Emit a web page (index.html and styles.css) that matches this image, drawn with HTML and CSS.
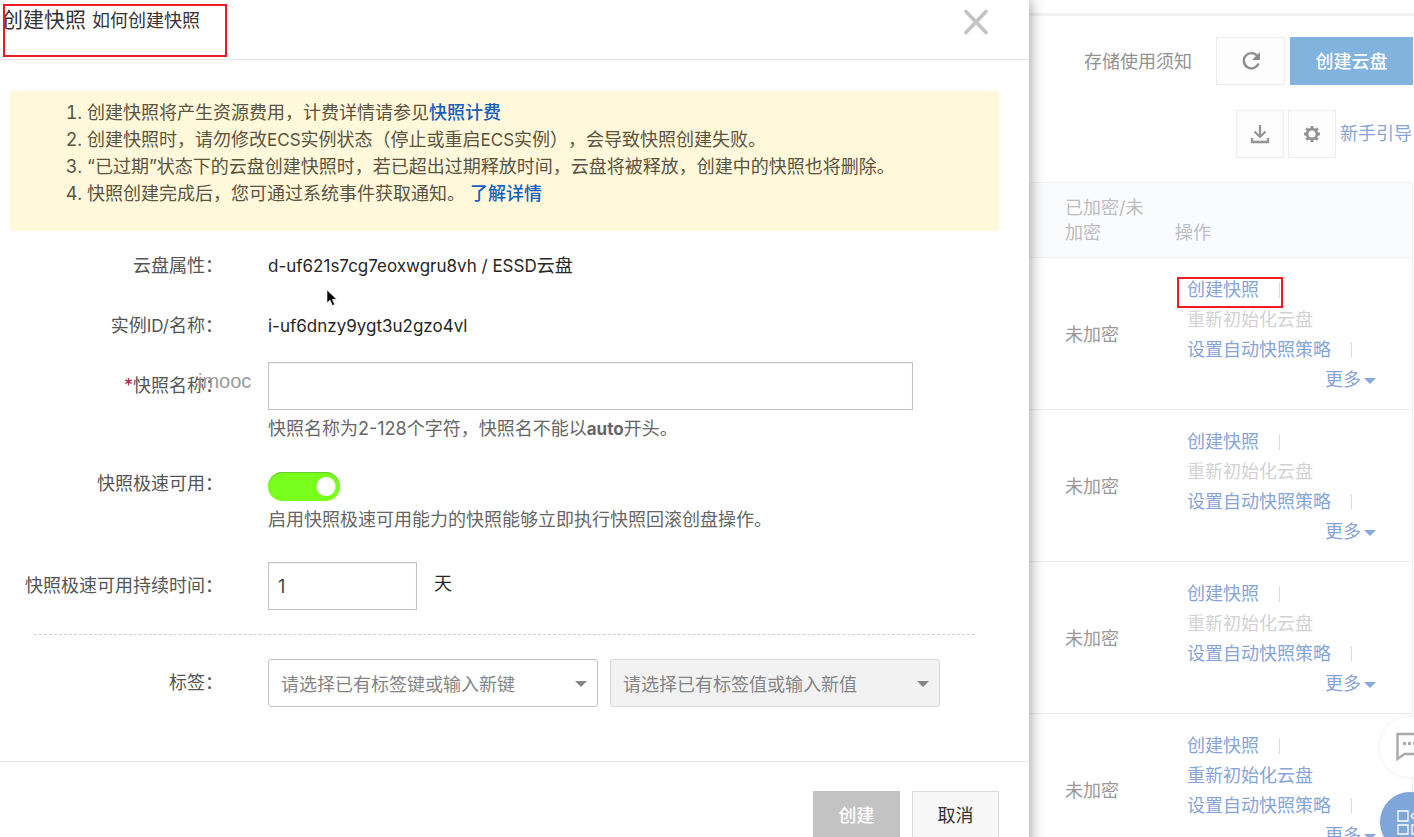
FILE: index.html
```html
<!DOCTYPE html>
<html lang="zh-CN">
<head>
<meta charset="utf-8">
<title>创建快照</title>
<link rel="stylesheet" href="styles.css">
</head>
<body>
<div class="app">
  <main class="dialog">
    <header class="dialog-head">
      <h1 class="title">创建快照 <a class="title-help" href="#">如何创建快照</a></h1>
      <button class="close" type="button" aria-label="关闭">
        <svg width="26" height="26" viewBox="0 0 26 26"><path d="M3 2.5 23 23.5M23 2.5 3 23.5" fill="none" stroke="#c3c3c3" stroke-width="3.6" stroke-linecap="round"/></svg>
      </button>
      <span class="mark mark-title"></span>
    </header>

    <section class="notice">
      <ol>
        <li>创建快照将产生资源费用，计费详情请参见<a href="#">快照计费</a></li>
        <li>创建快照时，请勿修改<span class="latin">ECS</span>实例状态（停止或重启<span class="latin">ECS</span>实例），会导致快照创建失败。</li>
        <li>“已过期”状态下的云盘创建快照时，若已超出过期释放时间，云盘将被释放，创建中的快照也将删除。</li>
        <li>快照创建完成后，您可通过系统事件获取通知。 <a href="#">了解详情</a></li>
      </ol>
    </section>

    <form class="form">
      <div class="row">
        <span class="label">云盘属性：</span>
        <div class="field value"><span class="latin">d-uf621s7cg7eoxwgru8vh / ESSD</span>云盘
          <svg class="cursor" width="12" height="18" viewBox="0 0 12 18"><path d="M1 1v13l3-3 2.400 5.500 2.200-1L6.300 10.200H10.600z" fill="#000" stroke="#fff" stroke-width=".6"/></svg>
        </div>
      </div>
      <div class="row">
        <span class="label">实例<span class="latin">ID/</span>名称：</span>
        <div class="field value"><span class="latin">i-uf6dnzy9ygt3u2gzo4vl</span></div>
      </div>
      <div class="row">
        <label class="label" for="name"><span class="required">*</span>快照名称：</label>
        <div class="field">
          <input class="text" id="name" type="text">
          <p class="hint">快照名称为2-128个字符，快照名不能以<b class="latin">auto</b>开头。</p>
        </div>
        <span class="watermark">imooc</span>
      </div>
      <div class="row">
        <label class="label" for="instant">快照极速可用：</label>
        <div class="field switch-field">
          <input class="switch" id="instant" type="checkbox" checked>
          <p class="hint">启用快照极速可用能力的快照能够立即执行快照回滚创盘操作。</p>
        </div>
      </div>
      <div class="row">
        <label class="label" for="days">快照极速可用持续时间：</label>
        <div class="field value inline">
          <input class="text days" id="days" type="text" value="1"><span>天</span>
        </div>
      </div>
      <hr class="divider">
      <div class="row">
        <label class="label" for="tag-key">标签：</label>
        <div class="field tags">
          <span class="picker"><select id="tag-key"><option>请选择已有标签键或输入新键</option></select></span>
          <span class="picker"><select aria-label="标签值" disabled><option>请选择已有标签值或输入新值</option></select></span>
        </div>
      </div>
    </form>

    <footer class="dialog-foot">
      <button class="btn btn-disabled" type="button" disabled>创建</button>
      <button class="btn" type="button">取消</button>
    </footer>
  </main>

  <aside class="side">
    <div class="topbar"></div>
    <div class="tools">
      <span class="tools-text">存储使用须知</span>
      <button class="tool wide" type="button" aria-label="刷新">
        <svg width="20" height="20" viewBox="0 0 20 20"><path d="M16.300 5A7.600 7.600 0 1 0 17.500 12.500" fill="none" stroke="#8c8c8c" stroke-width="2.300"/><path d="M19 1v8h-8z" fill="#8c8c8c"/></svg>
      </button>
      <button class="create" type="button">创建云盘</button>
    </div>
    <div class="tools tools-second">
      <button class="tool" type="button" aria-label="下载">
        <svg width="20" height="20" viewBox="0 0 20 20"><path d="M10 1v11M4.500 7.500l5.500 5.500 5.500-5.500" fill="none" stroke="#949494" stroke-width="2.200"/><path d="M2 14v4h16v-4" fill="none" stroke="#949494" stroke-width="2.400"/></svg>
      </button>
      <button class="tool" type="button" aria-label="设置">
        <svg width="18" height="18" viewBox="0 0 18 18" fill="none" stroke="#929292"><circle cx="9" cy="9" r="4.900" stroke-width="2.600"/><path d="M9 1v2.800M9 14.200V17M1 9h2.800M14.200 9H17M3.300 3.300l2 2M12.700 12.700l2 2M3.300 14.700l2-2M12.700 5.300l2-2" stroke-width="3"/></svg>
      </button>
      <a class="guide" href="#">新手引导</a>
    </div>

    <table class="disks">
      <thead>
        <tr><th class="col-state">已加密/未<br>加密</th><th>操作</th></tr>
      </thead>
      <tbody>
        <tr>
          <td class="col-state">未加密</td>
          <td class="ops">
            <div><a href="#">创建快照</a><i class="bar"></i><span class="mark mark-op"></span></div>
            <div class="off">重新初始化云盘</div>
            <div><a href="#">设置自动快照策略</a><i class="bar"></i></div>
            <div class="more"><a href="#">更多</a></div>
          </td>
        </tr>
        <tr>
          <td class="col-state">未加密</td>
          <td class="ops">
            <div><a href="#">创建快照</a><i class="bar"></i></div>
            <div class="off">重新初始化云盘</div>
            <div><a href="#">设置自动快照策略</a><i class="bar"></i></div>
            <div class="more"><a href="#">更多</a></div>
          </td>
        </tr>
        <tr>
          <td class="col-state">未加密</td>
          <td class="ops">
            <div><a href="#">创建快照</a><i class="bar"></i></div>
            <div class="off">重新初始化云盘</div>
            <div><a href="#">设置自动快照策略</a><i class="bar"></i></div>
            <div class="more"><a href="#">更多</a></div>
          </td>
        </tr>
        <tr>
          <td class="col-state">未加密</td>
          <td class="ops">
            <div><a href="#">创建快照</a><i class="bar"></i></div>
            <div><a href="#">重新初始化云盘</a></div>
            <div><a href="#">设置自动快照策略</a><i class="bar"></i></div>
            <div class="more"><a href="#">更多</a></div>
          </td>
        </tr>
      </tbody>
    </table>

    <div class="floats">
      <button class="float" type="button" aria-label="咨询">
        <svg width="28" height="30" viewBox="0 0 28 30"><path d="M1.500 2H26.500V22H8.500L1.500 27z" fill="none" stroke="#a9a9a9" stroke-width="2.400"/><path d="M7 11.500h3M12 11.500h3M17 11.500h3" stroke="#a9a9a9" stroke-width="3"/></svg>
      </button>
      <button class="float float-blue" type="button" aria-label="应用">
        <svg width="26" height="26" viewBox="0 0 26 26" fill="none" stroke="#fff" stroke-width="1.300"><path d="M1 2h10v10H1zM1 16h10v9H1zM15 16h10v9H15zM20 1l6 6-6 6-6-6z"/></svg>
      </button>
    </div>
  </aside>
</div>
</body>
</html>
```
FILE: styles.css
```css
* { box-sizing: border-box; }

body {
  margin: 0;
  font: 18px/30px Inter, "Noto Sans CJK SC", sans-serif;
  text-spacing-trim: space-all;
  color: #555;
  background: #fff;
}

button, input, select { font: inherit; }
button { cursor: pointer; }
a { text-decoration: none; }
.latin { font-size: 17px; line-height: 1; }

.app {
  display: flex;
  height: 100vh;
  overflow: hidden;
}

/* Dialog */
.dialog {
  position: relative;
  z-index: 1;
  flex: 1;
  min-width: 0;
  height: max-content;
  min-height: 100%;
  background: #fff;
  box-shadow: 0 0 14px rgba(0, 0, 0, .45);
}

.dialog-head {
  position: relative;
  display: flex;
  justify-content: space-between;
  align-items: flex-start;
  height: 60px;
  padding: 5px 40px 0 2px;
  border-bottom: 1px solid #e4e4e4;
}

.title {
  margin: 0;
  font-size: 21px;
  font-weight: 400;
  color: #333;
}

.title-help { font-size: 18px; color: #333; }

.close {
  display: flex;
  padding: 4px 0;
  border: 0;
  background: none;
}

.mark {
  position: absolute;
  border: 2px solid #ec1c24;
  pointer-events: none;
}

.mark-title { left: 3px; top: 4px; width: 224px; height: 53px; }
.mark-op { left: -10px; top: 2px; width: 106px; height: 31px; }

.notice {
  margin: 31px 30px 11px 10px;
  padding: 8px 0 24px;
  background: #fff8da;
  color: #5b5340;
}

.notice ol {
  margin: 0;
  padding-left: 77px;
  line-height: 27px;
}

.notice a { color: #1560bd; font-weight: 500; }

.row {
  position: relative;
  display: flex;
  gap: 45px;
  margin-bottom: 12px;
}

.label {
  flex: 0 0 223px;
  line-height: 48px;
  text-align: right;
  white-space: nowrap;
}

.required { color: #b3173f; }

.field {
  position: relative;
  flex: 1;
  min-width: 0;
  padding-right: 30px;
}

.value { line-height: 48px; color: #262626; }

.inline { display: flex; gap: 17px; line-height: 44px; }

.cursor {
  position: absolute;
  left: 58px;
  top: 47px;
}

.text {
  display: block;
  width: 100%;
  max-width: 645px;
  height: 48px;
  padding: 0 9px;
  border: 1px solid #c3c3c3;
  border-radius: 0;
  background: #fff;
  color: #444;
  box-shadow: inset 0 1px 2px rgba(0, 0, 0, .06);
}

.days { width: 149px; }

.hint { margin: 0; line-height: 38px; color: #666; }

.watermark {
  position: absolute;
  left: 198px;
  top: 4px;
  font: 20px/30px "Liberation Sans", Arial, sans-serif;
  color: #9a9a9a;
}

.switch-field { padding-top: 12px; padding-bottom: 11px; }

.switch {
  display: block;
  appearance: none;
  width: 72px;
  height: 29px;
  margin: 0;
  border-radius: 15px;
  background: radial-gradient(circle at 58px 50%, #fff 9px, #78ff1c 10px);
  box-shadow: inset 0 1px 1px #67c62b;
}

.divider {
  margin: 24px 54px 24px 34px;
  border: 0;
  border-top: 1px dashed #cfcfcf;
}

.tags { display: flex; gap: 12px; }

.picker {
  position: relative;
  flex: 0 1 330px;
}

.picker::after {
  content: "";
  position: absolute;
  right: 11px;
  top: 22px;
  width: 12px;
  height: 6px;
  background: #858585;
  clip-path: polygon(0 0, 100% 0, 50% 100%);
  pointer-events: none;
}

.picker select {
  appearance: none;
  width: 100%;
  height: 48px;
  padding: 3px 30px 0 12px;
  border: 1px solid #c3c3c3;
  border-radius: 3px;
  background: #fff;
  color: #858585;
  opacity: 1;
}

.picker select:disabled { background: #f2f2f2; border-color: #d8d8d8; }

.dialog-foot {
  display: flex;
  justify-content: flex-end;
  gap: 12px;
  margin-top: 54px;
  padding: 29px 30px 30px;
  border-top: 1px solid #e4e4e4;
}

.btn {
  width: 87px;
  height: 48px;
  padding: 2px 0 0;
  border: 1px solid #dcdcdc;
  background: #f7f7f7;
  color: #333;
}

.btn-disabled {
  border-color: #c3c3c3;
  background: #c3c3c3;
  color: #fff;
  font-weight: 500;
}

/* Page behind the dialog */
.side {
  position: relative;
  flex: 0 0 385px;
  overflow: hidden;
}

.topbar {
  height: 16px;
  border-bottom: 3px solid #f1f1f1;
}

.tools {
  display: flex;
  justify-content: flex-end;
  align-items: center;
  gap: 5px;
  padding: 21px 1px 0 0;
}

.tools-second { gap: 4px; padding: 25px 2px 24px 0; }

.tools-text { margin-right: 19px; padding-top: 2px; color: #929292; }

.tool {
  display: flex;
  align-items: center;
  justify-content: center;
  width: 48px;
  height: 48px;
  padding: 0;
  border: 1px solid #ececec;
  background: #fdfdfd;
}

.wide { width: 69px; }

.create {
  width: 123px;
  height: 48px;
  padding: 2px 0 0;
  border: 0;
  background: #82b2de;
  color: #fff;
  font-weight: 500;
}

.side a { color: #88a4d6; }

.disks {
  width: 384px;
  border-collapse: separate;
  border-spacing: 0;
  border-right: 1px solid #f0f0f0;
}

.disks th {
  padding: 12px 12px;
  border-top: 1px solid #f3f3f3;
  border-bottom: 1px solid #eef0f2;
  background: #fafbfd;
  color: #bdbdbd;
  font-weight: 400;
  line-height: 25px;
  text-align: left;
  vertical-align: bottom;
}

.disks td {
  padding: 17px 36px 14px 24px;
  border-bottom: 1px solid #ececec;
  color: #999;
}

.disks .col-state { width: 134px; padding-left: 36px; padding-right: 0; }

.ops div { position: relative; white-space: nowrap; }
.ops .off { color: #d2d2d2; }

.bar {
  display: inline-block;
  width: 1px;
  height: 16px;
  margin-left: 20px;
  background: #dadada;
  vertical-align: -2px;
}

.ops .more { text-align: right; }

.more a::after {
  content: "";
  display: inline-block;
  width: 12px;
  height: 6px;
  margin-left: 3px;
  background: #85a9d8;
  clip-path: polygon(0 0, 100% 0, 50% 100%);
  vertical-align: 2px;
}

.floats {
  position: absolute;
  left: 351px;
  top: 717px;
  display: grid;
  gap: 15px;
}

.float {
  display: flex;
  align-items: center;
  width: 60px;
  height: 60px;
  padding: 0 0 0 16px;
  border: 0;
  border-radius: 50%;
  background: #fff;
  box-shadow: 0 0 5px rgba(0, 0, 0, .07);
}

.float-blue { background: #7fa6d9; padding-left: 17px; }
```
